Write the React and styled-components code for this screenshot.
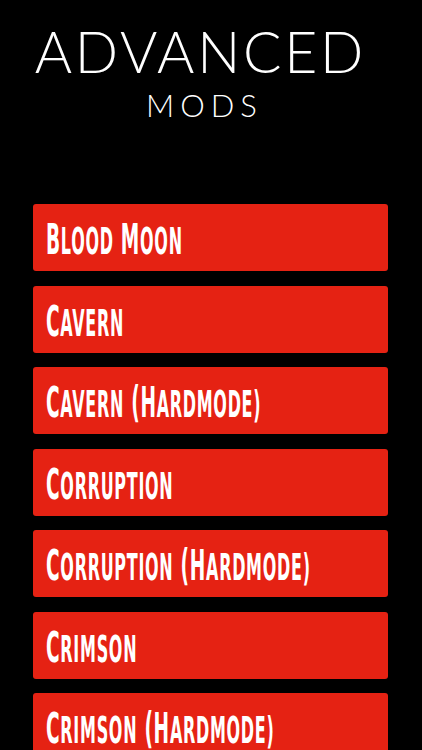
import styled, { createGlobalStyle } from 'styled-components';

const GlobalStyle = createGlobalStyle`
  html, body {
    margin: 0;
    padding: 0;
    background: #000;
  }
  body {
    width: 422px;
    height: 750px;
    overflow: hidden;
  }
`;

const Screen = styled.div`
  width: 422px;
  height: 750px;
  background: #000;
  display: flex;
  flex-direction: column;
  overflow: hidden;
`;

const Header = styled.header`
  display: flex;
  flex-direction: column;
  align-items: center;
  padding: 23px 24px 0 0;
  color: #fff;
  font-family: Lato, "Liberation Sans", sans-serif;
  font-weight: 300;
  line-height: 1;
`;

const Title = styled.h1`
  margin: 0 -2.7px 0 0;
  font-size: 57px;
  font-weight: 300;
  letter-spacing: 2.7px;
`;

const Subtitle = styled.h2`
  margin: 10px -6px 0 0;
  font-size: 31px;
  font-weight: 300;
  letter-spacing: 6px;
  padding-left: 5px;
`;

const List = styled.nav`
  display: flex;
  flex-direction: column;
  gap: 14.5px;
  padding: 83px 34px 0 33px;
`;

const ModButton = styled.button`
  height: 67px;
  flex-shrink: 0;
  border: none;
  border-radius: 3px;
  background: #e52213;
  color: #fff;
  display: flex;
  align-items: center;
  padding: 3px 0 0 13px;
  cursor: pointer;
  text-align: left;
`;

const Label = styled.span`
  display: inline-block;
  font-family: "DejaVu Sans Condensed", "DejaVu Sans", sans-serif;
  font-weight: bold;
  font-size: 43px;
  text-transform: uppercase;
  white-space: nowrap;
  transform: scaleX(0.48);
  transform-origin: left center;
  letter-spacing: 1.5px;
`;

const Small = styled.span`
  font-size: 0.86em;
`;

const renderLabel = (text) =>
  text.split(' ').map((word, i) => {
    const lead = word.startsWith('(') ? 2 : 1;
    return (
      <span key={i}>
        {i > 0 ? ' ' : ''}
        {word.slice(0, lead)}
        <Small>{word.slice(lead)}</Small>
      </span>
    );
  });

const mods = [
  'Blood Moon',
  'Cavern',
  'Cavern (Hardmode)',
  'Corruption',
  'Corruption (Hardmode)',
  'Crimson',
  'Crimson (Hardmode)',
];

const App = () => {
  return (
    <Screen>
      <GlobalStyle />
      <Header>
        <Title>ADVANCED</Title>
        <Subtitle>MODS</Subtitle>
      </Header>
      <List>
        {mods.map((m) => (
          <ModButton key={m}>
            <Label>{renderLabel(m)}</Label>
          </ModButton>
        ))}
      </List>
    </Screen>
  );
};

export default App;
